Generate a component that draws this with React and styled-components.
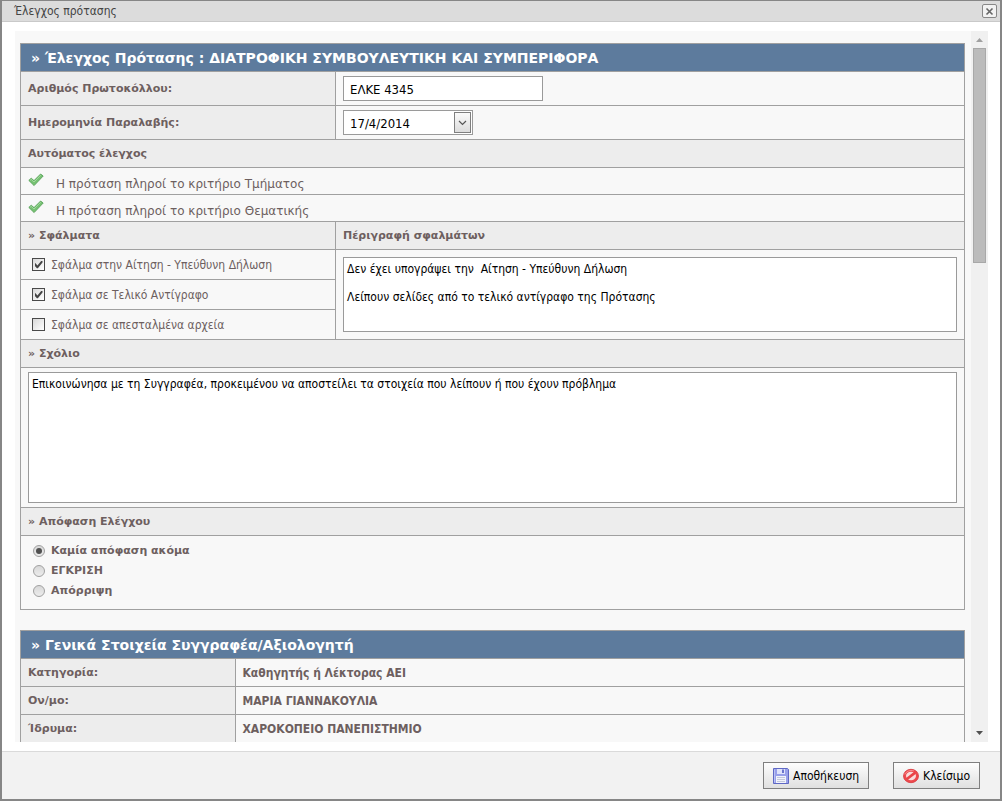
import React from "react";
import styled, { createGlobalStyle } from "styled-components";

const wide = '"DejaVu Sans", Verdana, sans-serif';
const narrow = '"DejaVu Sans Condensed", "DejaVu Sans", Tahoma, sans-serif';

const Global = createGlobalStyle`
  *, *::before, *::after { box-sizing: border-box; }
  body { margin: 0; background: #8c8c8c; color: #6d5f5f; font: 12px/14px ${narrow}; }
  input, textarea, button { font: inherit; color: #000; margin: 0; border-radius: 0; }
`;

const Dialog = styled.main`
  display: flex;
  flex-direction: column;
  height: 100vh;
  background: #fff;
  border: solid #868686;
  border-width: 1px 2px 2px;
`;

const TitleBar = styled.header`
  display: flex;
  align-items: center;
  justify-content: space-between;
  flex: none;
  height: 21px;
  padding: 0 3px 0 12px;
  background: #dcdcdc;
  border-bottom: 1px solid #c9c9c9;
`;

const Title = styled.h1`
  margin: 0;
  font-size: 12px;
  font-weight: 400;
  color: #444;
`;

const CloseBox = styled.button`
  display: grid;
  place-items: center;
  width: 15px;
  height: 14px;
  padding: 0;
  border: 1px solid #888;
  border-radius: 2px;
  background: #f2f2f2;
`;

const Body = styled.div`
  display: flex;
  flex: 1;
  min-height: 0;
  margin: 9px 12px 9px 13px;
  background: #f8f8f8;
`;

const Pane = styled.div`
  flex: 1;
  min-width: 0;
  overflow-y: auto;
  scrollbar-width: none;
  padding: 12px 6px 0 5px;
`;

const ScrollTrack = styled.div`
  display: flex;
  flex-direction: column;
  align-items: center;
  flex: none;
  width: 17px;
  background: #f0f0f0;
`;

const Thumb = styled.div`
  width: 13px;
  height: 215px;
  background: #bbb;
  border: 1px solid #a8a8a8;
`;

const Arrow = styled.svg`
  flex: none;
  width: 17px;
  height: 17px;
  fill: ${(p) => p.$tone};
  margin-top: ${(p) => (p.$end ? "auto" : 0)};
`;

const Section = styled.section`
  border: 1px solid #a0a0a0;
  margin-bottom: 20px;
`;

const SectionHeading = styled.h2`
  margin: 0;
  height: 27px;
  padding: 0 10px;
  font: bold 14px/28px ${wide};
  color: #fff;
  background: #5d7b9d;
`;

const Row = styled.div`
  display: grid;
  grid-template-columns: ${(p) => (p.$split ? "314px 1fr" : "1fr")};
  border-top: 1px solid #a0a0a0;
`;

const Cell = styled.div`
  display: flex;
  align-items: center;
  min-height: ${(p) => p.$h || 27}px;
  padding: 0 7px;
  background: ${(p) => (p.$shade ? "#ededed" : "#f8f8f8")};

  & + & { border-left: 1px solid #a0a0a0; }
`;

const FieldLabel = styled.label`
  font: bold 11px/14px ${wide};
`;

const SubHeading = styled.h3`
  margin: 0;
  font: bold 11px/14px ${wide};
`;

const TextBox = styled.input`
  width: 200px;
  height: 25px;
  padding: 2px 6px 0;
  border: 1px solid #9a9a9a;
  background: #fff;
  font-size: 13px;
`;

const DateBox = styled.div`
  display: flex;
  width: 130px;
  height: 25px;
  padding: 1px;
  border: 1px solid #9a9a9a;
  background: #fff;
`;

const DateInput = styled.input`
  flex: 1;
  min-width: 0;
  padding: 2px 5px 0;
  border: 0;
  background: none;
  font-size: 13px;
`;

const DropButton = styled.button`
  display: grid;
  place-items: center;
  width: 17px;
  padding: 0;
  border: 1px solid #7f7f7f;
  background: linear-gradient(#fafafa, #dcdcdc);
`;

const CheckLine = styled.p`
  display: flex;
  align-items: center;
  gap: 12px;
  margin: 0;
  min-height: 26px;
  font: 12px/14px ${wide};

  svg { flex: none; margin-bottom: 2px; }
  span { padding-top: 6px; }
`;

const ErrorList = styled.div`
  display: flex;
  flex-direction: column;
`;

const Choice = styled.label`
  display: flex;
  align-items: center;
  gap: 6px;
  padding-left: 11px;
`;

const ErrorChoice = styled(Choice)`
  min-height: 29px;
  & + & { min-height: 30px; border-top: 1px solid #a0a0a0; }
`;

const DecisionChoice = styled(Choice)`
  min-height: 20px;
  padding-left: 12px;
  font: bold 11px/14px ${wide};
`;

const Tick = styled.input.attrs({ type: "checkbox" })`
  appearance: none;
  display: grid;
  place-items: center;
  width: 13px;
  height: 13px;
  border: 1px solid #4a4a4a;
  background: linear-gradient(135deg, #d8d8d8, #fff);

  &:checked::before {
    content: "";
    width: 8px;
    height: 8px;
    background: #444;
    clip-path: polygon(0 35%, 14% 35%, 36% 62%, 86% 4%, 100% 4%, 100% 26%, 42% 96%, 30% 96%, 0 62%);
  }
`;

const Radio = styled.input.attrs({ type: "radio" })`
  appearance: none;
  display: grid;
  place-items: center;
  width: 12px;
  height: 12px;
  border: 1px solid #a0a0a0;
  border-radius: 50%;
  background: linear-gradient(#d8d8d8, #ececec);

  &:checked::before {
    content: "";
    width: 6px;
    height: 6px;
    border-radius: 50%;
    background: #505050;
  }
`;

const Decisions = styled.fieldset`
  margin: 0;
  padding: 5px 0 8px;
  border: 0;
  border-top: 1px solid #a0a0a0;
`;

const AreaCell = styled.div`
  display: flex;
  padding: ${(p) => p.$pad};
  border-left: ${(p) => (p.$divided ? "1px solid #a0a0a0" : 0)};
`;

const Area = styled.textarea`
  flex: 1;
  min-width: 0;
  height: ${(p) => p.$h}px;
  padding: 4px 3px;
  resize: none;
  border: 1px solid #9a9a9a;
  background: #fff;
`;

const DataTable = styled.table`
  width: 100%;
  border-collapse: collapse;
  text-align: left;

  tr { border-top: 1px solid #a0a0a0; }
  th {
    width: 214px;
    height: 28px;
    padding: 0 7px;
    font: bold 11px/14px ${wide};
    background: #ededed;
    border-right: 1px solid #a0a0a0;
  }
  td { padding: 0 7px; font-weight: bold; }
`;

const Footer = styled.footer`
  display: flex;
  justify-content: flex-end;
  align-items: center;
  gap: 24px;
  flex: none;
  height: 48px;
  padding: 0 20px;
  background: #f2f2f2;
  border-top: 1px solid #dadada;
`;

const ActionButton = styled.button`
  display: flex;
  align-items: center;
  gap: 4px;
  height: 27px;
  padding: 0 9px;
  border: 1px solid #7f7f7f;
  background: linear-gradient(#fdfdfd, #e0e0e0);
`;

const GreenCheck = () => (
  <svg width="16" height="16" viewBox="0 0 16 16" aria-hidden="true">
    <path d="M.8 8.400 3.200 6.200 6 8.600 12.600 2l2.600 2L6.100 13.600z" fill="#76c272" stroke="#4f9a50" strokeWidth="0.8" strokeLinejoin="round" />
    <path d="M2.200 8.300 3.300 7.400 6 10 12.700 3.200" fill="none" stroke="#a9dda5" strokeWidth="0.9" />
  </svg>
);

const FloppyIcon = () => (
  <svg width="16" height="16" viewBox="0 0 16 16" aria-hidden="true">
    <path d="M.5.5h14l1 1v14H.5z" fill="#98a0ea" stroke="#5f68c4" />
    <path d="M1.500 1.500v13" stroke="#bcc2f4" />
    <path d="M4 1h8v5H4z" fill="#dfe3fb" />
    <path d="M9 1.500h2V5H9z" fill="#6a74cc" />
    <path d="M3 8h10v7H3z" fill="#f1f3fb" />
    <path d="M4 9.500h8M4 11.500h8M4 13.500h8" stroke="#c3c8dc" />
  </svg>
);

const ForbidIcon = () => (
  <svg width="16" height="16" viewBox="0 0 16 16" aria-hidden="true">
    <ellipse cx="8" cy="8" rx="7.500" ry="6.700" fill="#ee4a4e" stroke="#d8363b" strokeWidth="0.8" />
    <ellipse cx="8" cy="8" rx="5" ry="4.200" fill="#f8dcdc" />
    <path d="M3.600 11.200 12.200 4.600" stroke="#ea4347" strokeWidth="2.600" />
    <path d="M1.900 6.400C3.200 3.200 7 1.900 10.800 2.800" fill="none" stroke="#f79a9c" strokeWidth="0.9" />
  </svg>
);

const errors = [
  ["Σφάλμα στην Αίτηση - Υπεύθυνη Δήλωση", true],
  ["Σφάλμα σε Τελικό Αντίγραφο", true],
  ["Σφάλμα σε απεσταλμένα αρχεία", false],
];

const decisions = ["Καμία απόφαση ακόμα", "ΕΓΚΡΙΣΗ", "Απόρριψη"];

const author = [
  ["Κατηγορία:", "Καθηγητής ή Λέκτορας ΑΕΙ"],
  ["Ον/μο:", "ΜΑΡΙΑ ΓΙΑΝΝΑΚΟΥΛΙΑ"],
  ["Ίδρυμα:", "ΧΑΡΟΚΟΠΕΙΟ ΠΑΝΕΠΙΣΤΗΜΙΟ"],
];

export default function App() {
  return (
    <>
      <Global />
      <Dialog>
        <TitleBar>
          <Title>Έλεγχος πρότασης</Title>
          <CloseBox type="button" aria-label="Κλείσιμο παραθύρου">
            <svg width="9" height="9" viewBox="0 0 9 9" aria-hidden="true">
              <path d="M1.500 1.500 7.500 7.500M7.500 1.500 1.500 7.500" stroke="#666" strokeWidth="1.600" />
            </svg>
          </CloseBox>
        </TitleBar>
        <Body>
          <Pane>
            <Section>
              <SectionHeading>» Έλεγχος Πρότασης : ΔΙΑΤΡΟΦΙΚΗ ΣΥΜΒΟΥΛΕΥΤΙΚΗ ΚΑΙ ΣΥΜΠΕΡΙΦΟΡΑ</SectionHeading>
              <Row $split>
                <Cell $shade $h={33}><FieldLabel htmlFor="protocol">Αριθμός Πρωτοκόλλου:</FieldLabel></Cell>
                <Cell $h={33}><TextBox id="protocol" type="text" defaultValue="ΕΛΚΕ 4345" /></Cell>
              </Row>
              <Row $split>
                <Cell $shade $h={33}><FieldLabel htmlFor="received">Ημερομηνία Παραλαβής:</FieldLabel></Cell>
                <Cell $h={33}>
                  <DateBox>
                    <DateInput id="received" type="text" defaultValue="17/4/2014" />
                    <DropButton type="button" aria-label="Επιλογή ημερομηνίας">
                      <svg width="9" height="6" viewBox="0 0 9 6" aria-hidden="true">
                        <path d="M1 1l3.500 3.500L8 1" fill="none" stroke="#555" strokeWidth="1.200" />
                      </svg>
                    </DropButton>
                  </DateBox>
                </Cell>
              </Row>
              <Row><Cell $shade><SubHeading>Αυτόματος έλεγχος</SubHeading></Cell></Row>
              <Row><Cell $h={26}><CheckLine><GreenCheck /><span>Η πρόταση πληροί το κριτήριο Τμήματος</span></CheckLine></Cell></Row>
              <Row><Cell $h={26}><CheckLine><GreenCheck /><span>Η πρόταση πληροί το κριτήριο Θεματικής</span></CheckLine></Cell></Row>
              <Row $split>
                <Cell $shade><SubHeading>» Σφάλματα</SubHeading></Cell>
                <Cell $shade><FieldLabel htmlFor="details">Πέριγραφή σφαλμάτων</FieldLabel></Cell>
              </Row>
              <Row $split>
                <ErrorList>
                  {errors.map(([text, on]) => (
                    <ErrorChoice key={text}><Tick defaultChecked={on} />{text}</ErrorChoice>
                  ))}
                </ErrorList>
                <AreaCell $pad="7px" $divided>
                  <Area id="details" $h={75} defaultValue={"Δεν έχει υπογράψει την  Αίτηση - Υπεύθυνη Δήλωση\n\nΛείπουν σελίδες από το τελικό αντίγραφο της Πρότασης"} />
                </AreaCell>
              </Row>
              <Row><Cell $shade><FieldLabel htmlFor="comment">» Σχόλιο</FieldLabel></Cell></Row>
              <Row>
                <AreaCell $pad="4px 7px">
                  <Area id="comment" $h={131} defaultValue="Επικοινώνησα με τη Συγγραφέα, προκειμένου να αποστείλει τα στοιχεία που λείπουν ή που έχουν πρόβλημα" />
                </AreaCell>
              </Row>
              <Row><Cell $shade><SubHeading id="decision">» Απόφαση Ελέγχου</SubHeading></Cell></Row>
              <Decisions aria-labelledby="decision">
                {decisions.map((text, i) => (
                  <DecisionChoice key={text}><Radio name="decision" defaultChecked={i === 0} />{text}</DecisionChoice>
                ))}
              </Decisions>
            </Section>
            <Section>
              <SectionHeading>» Γενικά Στοιχεία Συγγραφέα/Αξιολογητή</SectionHeading>
              <DataTable>
                <tbody>
                  {author.map(([name, value]) => (
                    <tr key={name}><th scope="row">{name}</th><td>{value}</td></tr>
                  ))}
                </tbody>
              </DataTable>
            </Section>
          </Pane>
          <ScrollTrack aria-hidden="true">
            <Arrow viewBox="0 0 17 17" $tone="#a0a0a0"><path d="M5 11h7L8.500 7z" /></Arrow>
            <Thumb />
            <Arrow viewBox="0 0 17 17" $tone="#505050" $end><path d="M5 6h7L8.500 10z" /></Arrow>
          </ScrollTrack>
        </Body>
        <Footer>
          <ActionButton type="button"><FloppyIcon />Αποθήκευση</ActionButton>
          <ActionButton type="button"><ForbidIcon />Κλείσιμο</ActionButton>
        </Footer>
      </Dialog>
    </>
  );
}
